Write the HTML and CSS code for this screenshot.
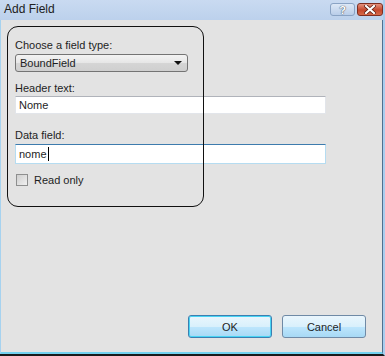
FILE: index.html
```html
<!DOCTYPE html>
<html lang="en">
<head>
    <meta charset="UTF-8">
    <title>Add Field</title>
    <link rel="stylesheet" href="styles.css">
</head>
<body>
    <div class="window">
        <div class="titlebar">
            <span class="title">Add Field</span>
            <div class="title-buttons">
                <span class="tbtn help">?</span>
                <span class="tbtn close">
                    <svg width="12" height="9" viewBox="0 0 12 9">
                        <path d="M2 1 L10 8 M10 1 L2 8" stroke="#5a1a10" stroke-width="3.6" stroke-linecap="square"/>
                        <path d="M2 1 L10 8 M10 1 L2 8" stroke="#fff" stroke-width="2.2" stroke-linecap="square"/>
                    </svg>
                </span>
            </div>
        </div>

        <div class="client">
            <div class="form">
                <label class="lbl first">Choose a field type:</label>
                <div class="select">
                    <span>BoundField</span>
                    <span class="arrow"></span>
                </div>

                <label class="lbl">Header text:</label>
                <div class="input">Nome</div>

                <label class="lbl gap">Data field:</label>
                <div class="input focus">nome<span class="caret"></span></div>

                <div class="check-row">
                    <span class="checkbox"></span>
                    <span>Read only</span>
                </div>
            </div>

            <div class="buttons">
                <button class="btn default">OK</button>
                <button class="btn">Cancel</button>
            </div>

            <!-- hand drawn outline over the field panel -->
            <div class="outline"></div>
        </div>
    </div>
</body>
</html>
```

FILE: styles.css
```css
* {
    margin: 0;
    padding: 0;
    box-sizing: border-box;
}

body {
    width: 385px;
    height: 356px;
    overflow: hidden;
    font-family: 'Liberation Sans', Arial, sans-serif;
    font-size: 11px;
    color: #1e1e1e;
    background: #b9cfea;
}

.window {
    width: 385px;
    height: 356px;
    display: flex;
    flex-direction: column;
    border-right: 2px solid #a9cdee;
    border-bottom: 2px solid #1a1a1a;
    background: #c3d6ef;
}

.titlebar {
    height: 20px;
    display: flex;
    align-items: center;
    justify-content: space-between;
    padding-left: 4px;
    background: linear-gradient(#c9daf1, #bcd1ec);
}

.title {
    font-size: 12px;
    color: #202020;
    margin-top: -2px;
}

.title-buttons {
    display: flex;
    gap: 2px;
    align-self: flex-start;
    margin-top: 3px;
}

.tbtn {
    height: 13px;
    display: flex;
    align-items: center;
    justify-content: center;
    border-radius: 3px;
    font-weight: bold;
    font-size: 11px;
}

.help {
    width: 25px;
    color: #fff;
    background: linear-gradient(#dde8f6, #b9cde9);
    border: 1px solid #8aa3c4;
    text-shadow: 0 0 1px #3d4a5c, 0 0 1px #3d4a5c;
}

.close {
    width: 26px;
    background: linear-gradient(#e4937f, #c5472d 55%, #d66a4a);
    border: 1px solid #7d2e22;
}

.client {
    position: relative;
    flex: 1;
    display: flex;
    flex-direction: column;
    background: #e3e3e3;
    border-left: 1px solid #a6d2ef;
    border-right: 1px solid #50708f;
    border-bottom: 2px solid #72d1ef;
}

.form {
    display: flex;
    flex-direction: column;
    align-items: flex-start;
    padding: 18px 0 0 14px;
}

.lbl {
    display: block;
    height: 14px;
    line-height: 14px;
    margin-top: 9px;
}

.lbl.first {
    margin-top: 0;
}

.lbl.gap {
    margin-top: 14px;
}

.select {
    width: 173px;
    height: 18px;
    margin-top: 2px;
    padding: 0 4px;
    display: flex;
    align-items: center;
    justify-content: space-between;
    border: 1px solid #747474;
    border-radius: 3px;
    background: linear-gradient(#f3f3f3, #e6e6e6 50%, #d5d5d5 51%, #cfcfcf);
}

.arrow {
    width: 0;
    height: 0;
    margin-right: 1px;
    border-left: 4px solid transparent;
    border-right: 4px solid transparent;
    border-top: 4px solid #111;
}

.input {
    width: 311px;
    height: 18px;
    margin-top: 1px;
    padding: 0 3px;
    line-height: 16px;
    background: #fff;
    border: 1px solid #e2e5ea;
    border-top-color: #b0b3ba;
}

.input.focus {
    height: 20px;
    margin-top: 2px;
    line-height: 18px;
    border-color: #b5dcf1;
    border-top-color: #3d7bad;
}

.caret {
    display: inline-block;
    width: 1px;
    height: 14px;
    margin-left: 1px;
    vertical-align: -3px;
    background: #000;
}

.check-row {
    display: flex;
    align-items: center;
    gap: 6px;
    margin-top: 10px;
    margin-left: 1px;
}

.checkbox {
    width: 12px;
    height: 12px;
    border: 1px solid #8e8f8f;
    background: linear-gradient(135deg, #cfcfcf, #f0f0f0);
}

.buttons {
    margin-top: auto;
    display: flex;
    justify-content: flex-end;
    gap: 10px;
    padding: 0 16px 14px 0;
}

.btn {
    width: 84px;
    height: 23px;
    font-family: inherit;
    font-size: 11px;
    color: #1e1e1e;
    border: 1px solid #6f8aa6;
    border-radius: 3px;
    background: linear-gradient(#eaf6fd, #d9f0fc 50%, #bee6fd 51%, #a7d9f5);
}

.btn.default {
    border-color: #3c7fb1;
    box-shadow: inset 0 0 0 1px #48d4f4;
}

.outline {
    position: absolute;
    left: 6px;
    top: 6px;
    width: 197px;
    height: 181px;
    border: 1.5px solid #111;
    border-radius: 11px;
}
```
